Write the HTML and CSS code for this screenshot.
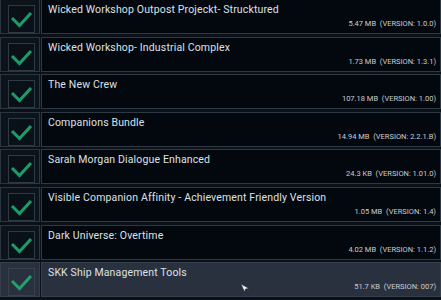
FILE: index.html
```html
<!DOCTYPE html>
<html>
<head>
  <title>Mod List</title>
  <link rel="stylesheet" href="styles.css">
</head>
<body>
  <div class="mod-list">
    <div class="mod-row">
      <div class="check-cell"><div class="check-box"><svg viewBox="0 0 27 28"><path d="M4 13 L11.5 20.5 L23 8"/></svg></div></div>
      <div class="info-cell">
        <div class="mod-title">Wicked Workshop Outpost Projeckt- Strucktured</div>
        <div class="mod-meta">5.47 MB&nbsp; (VERSION: 1.0.0)</div>
      </div>
    </div>
    <div class="mod-row">
      <div class="check-cell"><div class="check-box"><svg viewBox="0 0 27 28"><path d="M4 13 L11.5 20.5 L23 8"/></svg></div></div>
      <div class="info-cell">
        <div class="mod-title">Wicked Workshop- Industrial Complex</div>
        <div class="mod-meta">1.73 MB&nbsp; (VERSION: 1.3.1)</div>
      </div>
    </div>
    <div class="mod-row">
      <div class="check-cell"><div class="check-box"><svg viewBox="0 0 27 28"><path d="M4 13 L11.5 20.5 L23 8"/></svg></div></div>
      <div class="info-cell">
        <div class="mod-title">The New Crew</div>
        <div class="mod-meta">107.18 MB&nbsp; (VERSION: 1.00)</div>
      </div>
    </div>
    <div class="mod-row">
      <div class="check-cell"><div class="check-box"><svg viewBox="0 0 27 28"><path d="M4 13 L11.5 20.5 L23 8"/></svg></div></div>
      <div class="info-cell">
        <div class="mod-title">Companions Bundle</div>
        <div class="mod-meta">14.94 MB&nbsp; (VERSION: 2.2.1.B)</div>
      </div>
    </div>
    <div class="mod-row">
      <div class="check-cell"><div class="check-box"><svg viewBox="0 0 27 28"><path d="M4 13 L11.5 20.5 L23 8"/></svg></div></div>
      <div class="info-cell">
        <div class="mod-title">Sarah Morgan Dialogue Enhanced</div>
        <div class="mod-meta">24.3 KB&nbsp; (VERSION: 1.01.0)</div>
      </div>
    </div>
    <div class="mod-row">
      <div class="check-cell"><div class="check-box"><svg viewBox="0 0 27 28"><path d="M4 13 L11.5 20.5 L23 8"/></svg></div></div>
      <div class="info-cell">
        <div class="mod-title">Visible Companion Affinity - Achievement Friendly Version</div>
        <div class="mod-meta">1.05 MB&nbsp; (VERSION: 1.4)</div>
      </div>
    </div>
    <div class="mod-row">
      <div class="check-cell"><div class="check-box"><svg viewBox="0 0 27 28"><path d="M4 13 L11.5 20.5 L23 8"/></svg></div></div>
      <div class="info-cell">
        <div class="mod-title">Dark Universe: Overtime</div>
        <div class="mod-meta">4.02 MB&nbsp; (VERSION: 1.1.2)</div>
      </div>
    </div>
    <div class="mod-row selected">
      <div class="check-cell"><div class="check-box"><svg viewBox="0 0 27 28"><path d="M4 13 L11.5 20.5 L23 8"/></svg></div></div>
      <div class="info-cell">
        <div class="mod-title">SKK Ship Management Tools</div>
        <div class="mod-meta">51.7 KB&nbsp; (VERSION: 007)</div>
      </div>
    </div>
  </div>

  <svg class="cursor" viewBox="0 0 10 10"><path d="M0 0 L9 5 L5 5.5 L4 9 Z"/></svg>
</body>
</html>
```

FILE: styles.css
```css
body { margin: 0; background: #0b1118; font-family: Roboto, "DejaVu Sans", sans-serif; overflow: hidden; position: relative; height: 300px; }
.mod-list { display: flex; flex-direction: column; gap: 2.6px; margin-top: -1px; }
.mod-row { display: flex; gap: 1px; height: 35px; }
.check-cell {
  width: 40px;
  box-sizing: border-box;
  border: 1px solid #2c3640;
  background: #0c131b;
  padding: 5px 0 0 7px;
}
.check-box {
  width: 27px;
  height: 28px;
  box-sizing: border-box;
  border: 1px solid #2e3a44;
  background: #0a1017;
}
.check-box svg { display: block; width: 27px; height: 28px; margin: -1px; }
.check-box path { fill: none; stroke: #1d9c6b; stroke-width: 3; }
.info-cell {
  flex: 1;
  box-sizing: border-box;
  border: 1px solid #2f3943;
  background: #03080f;
  padding: 3px 4px 0 6px;
  display: flex;
  flex-direction: column;
}
.mod-title { font-size: 10.5px; color: #dde1e4; line-height: 13px; letter-spacing: 0.15px; }
.mod-meta { font-size: 7.5px; color: #c9cdd1; text-align: right; line-height: 10px; margin-top: 3px; }
.selected .check-cell, .selected .info-cell { background: #2a313e; border-color: #353e4b; }
.selected .check-box { background: #2a313e; border-color: #38414d; }
.selected .check-box path { stroke: #22a06d; }
.cursor { position: absolute; left: 241px; top: 284px; width: 9px; height: 9px; }
.cursor path { fill: #f2f2f2; stroke: #222; stroke-width: 0.6; }
```
